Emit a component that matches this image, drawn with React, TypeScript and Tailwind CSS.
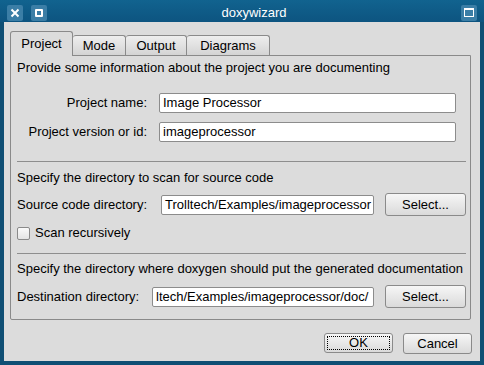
import type { ReactNode } from 'react';

const FONT = "font-['Liberation_Sans',Arial,sans-serif]";

function TitleButton({ children }: { children: ReactNode }) {
    return (
        <div className="flex size-[16px] items-center justify-center rounded-[2px] bg-[#3b7ea6]">
            {children}
        </div>
    );
}

function Field({ value, className }: { value: string; className: string }) {
    return (
        <div
            className={`flex h-[20px] items-center overflow-hidden rounded-[2px] border border-[#8c8c8c] bg-white pl-[3px] text-[13px] whitespace-nowrap text-black ${className}`}
        >
            {value}
        </div>
    );
}

function PushButton({
    label,
    focus = false,
    className = '',
}: {
    label: string;
    focus?: boolean;
    className?: string;
}) {
    return (
        <div
            className={`flex items-center justify-center rounded-[3px] border border-[#8a8a8a] bg-gradient-to-b from-[#f6f6f6] to-[#dadada] p-[2px] text-[13px] text-black ${className}`}
        >
            <div
                className={`flex size-full items-center justify-center ${focus ? 'border border-dotted border-black' : ''}`}
            >
                {label}
            </div>
        </div>
    );
}

function Separator() {
    return <div className="h-px bg-[#8e8e8e]" />;
}

const TABS = [
    { label: 'Mode', width: 'w-[53px]' },
    { label: 'Output', width: 'w-[61px]' },
    { label: 'Diagrams', width: 'w-[83px]' },
];

export default function App() {
    return (
        <div
            className={`flex h-[365px] w-[484px] flex-col bg-[#0f4f74] ${FONT}`}
        >
            {/* window title bar */}
            <div className="relative flex h-[22px] items-center bg-gradient-to-b from-[#11638f] to-[#0d5480] px-[7px] pt-[4px] pb-px">
                <div className="flex gap-[8px]">
                    <TitleButton>
                        <svg width="10" height="10" viewBox="0 0 10 10">
                            <path
                                d="M1.5 1.5 L8.5 8.5 M8.5 1.5 L1.5 8.5"
                                stroke="white"
                                strokeWidth="2"
                            />
                        </svg>
                    </TitleButton>
                    <TitleButton>
                        <div className="size-[8px] rounded-[1px] border-2 border-white" />
                    </TitleButton>
                </div>
                <div className="flex-1 text-center text-[13px] text-white">
                    doxywizard
                </div>
                <TitleButton>
                    <div className="h-[9px] w-[10px] border border-t-2 border-white" />
                </TitleButton>
            </div>

            {/* dialog body */}
            <div className="mx-[4px] mb-[4px] flex flex-1 flex-col bg-[#dcdcdc] px-[6px] pt-[9px]">
                <div className="flex items-end">
                    <div className="relative z-10 -mb-px flex h-[25px] w-[63px] items-center justify-center rounded-t-[3px] border border-b-0 border-[#8a8a8a] bg-[#dcdcdc] text-[13px] text-black">
                        Project
                    </div>
                    {TABS.map((tab) => (
                        <div
                            key={tab.label}
                            className={`flex h-[20px] items-center justify-center rounded-t-[3px] border border-b-0 border-l-0 border-[#8a8a8a] bg-gradient-to-b from-[#eeeeee] to-[#d4d4d4] text-[13px] text-black ${tab.width}`}
                        >
                            {tab.label}
                        </div>
                    ))}
                </div>

                <div className="flex h-[265px] w-[461px] flex-col rounded-b-[2px] border border-[#8a8a8a] pr-[4px] pl-[6px] text-[13px] leading-[16px] text-black">
                    <div className="mt-[4px]">
                        Provide some information about the project you are
                        documenting
                    </div>

                    <div className="mt-[17px] grid grid-cols-[130px_297px] items-center gap-x-[12px] gap-y-[9px]">
                        <div className="text-right">Project name:</div>
                        <Field value="Image Processor" className="" />
                        <div className="text-right">Project version or id:</div>
                        <Field value="imageprocessor" className="" />
                    </div>

                    <div className="mt-[19px]">
                        <Separator />
                    </div>

                    <div className="mt-[8px]">
                        Specify the directory to scan for source code
                    </div>

                    <div className="mt-[7px] flex h-[23px] items-center">
                        <div className="w-[144px]">Source code directory:</div>
                        <Field
                            value="Trolltech/Examples/imageprocessor"
                            className="w-[213px]"
                        />
                        <PushButton
                            label="Select..."
                            className="ml-auto h-[23px] w-[81px]"
                        />
                    </div>

                    <div className="mt-[9px] flex h-[16px] items-center gap-[5px]">
                        <div className="size-[13px] rounded-[2px] border border-[#8a8a8a] bg-gradient-to-b from-[#fafafa] to-[#e4e4e4]" />
                        Scan recursively
                    </div>

                    <div className="mt-[12px]">
                        <Separator />
                    </div>

                    <div className="mt-[7px]">
                        Specify the directory where doxygen should put the
                        generated documentation
                    </div>

                    <div className="mt-[8px] flex h-[23px] items-center">
                        <div className="w-[135px]">Destination directory:</div>
                        <Field
                            value="ltech/Examples/imageprocessor/doc/"
                            className="w-[222px]"
                        />
                        <PushButton
                            label="Select..."
                            className="ml-auto h-[23px] w-[81px]"
                        />
                    </div>
                </div>

                <div className="mt-[13px] flex justify-end gap-[10px] pr-[2px]">
                    <PushButton label="OK" focus className="h-[20px] w-[69px]" />
                    <PushButton label="Cancel" className="h-[21px] w-[69px]" />
                </div>
            </div>
        </div>
    );
}
